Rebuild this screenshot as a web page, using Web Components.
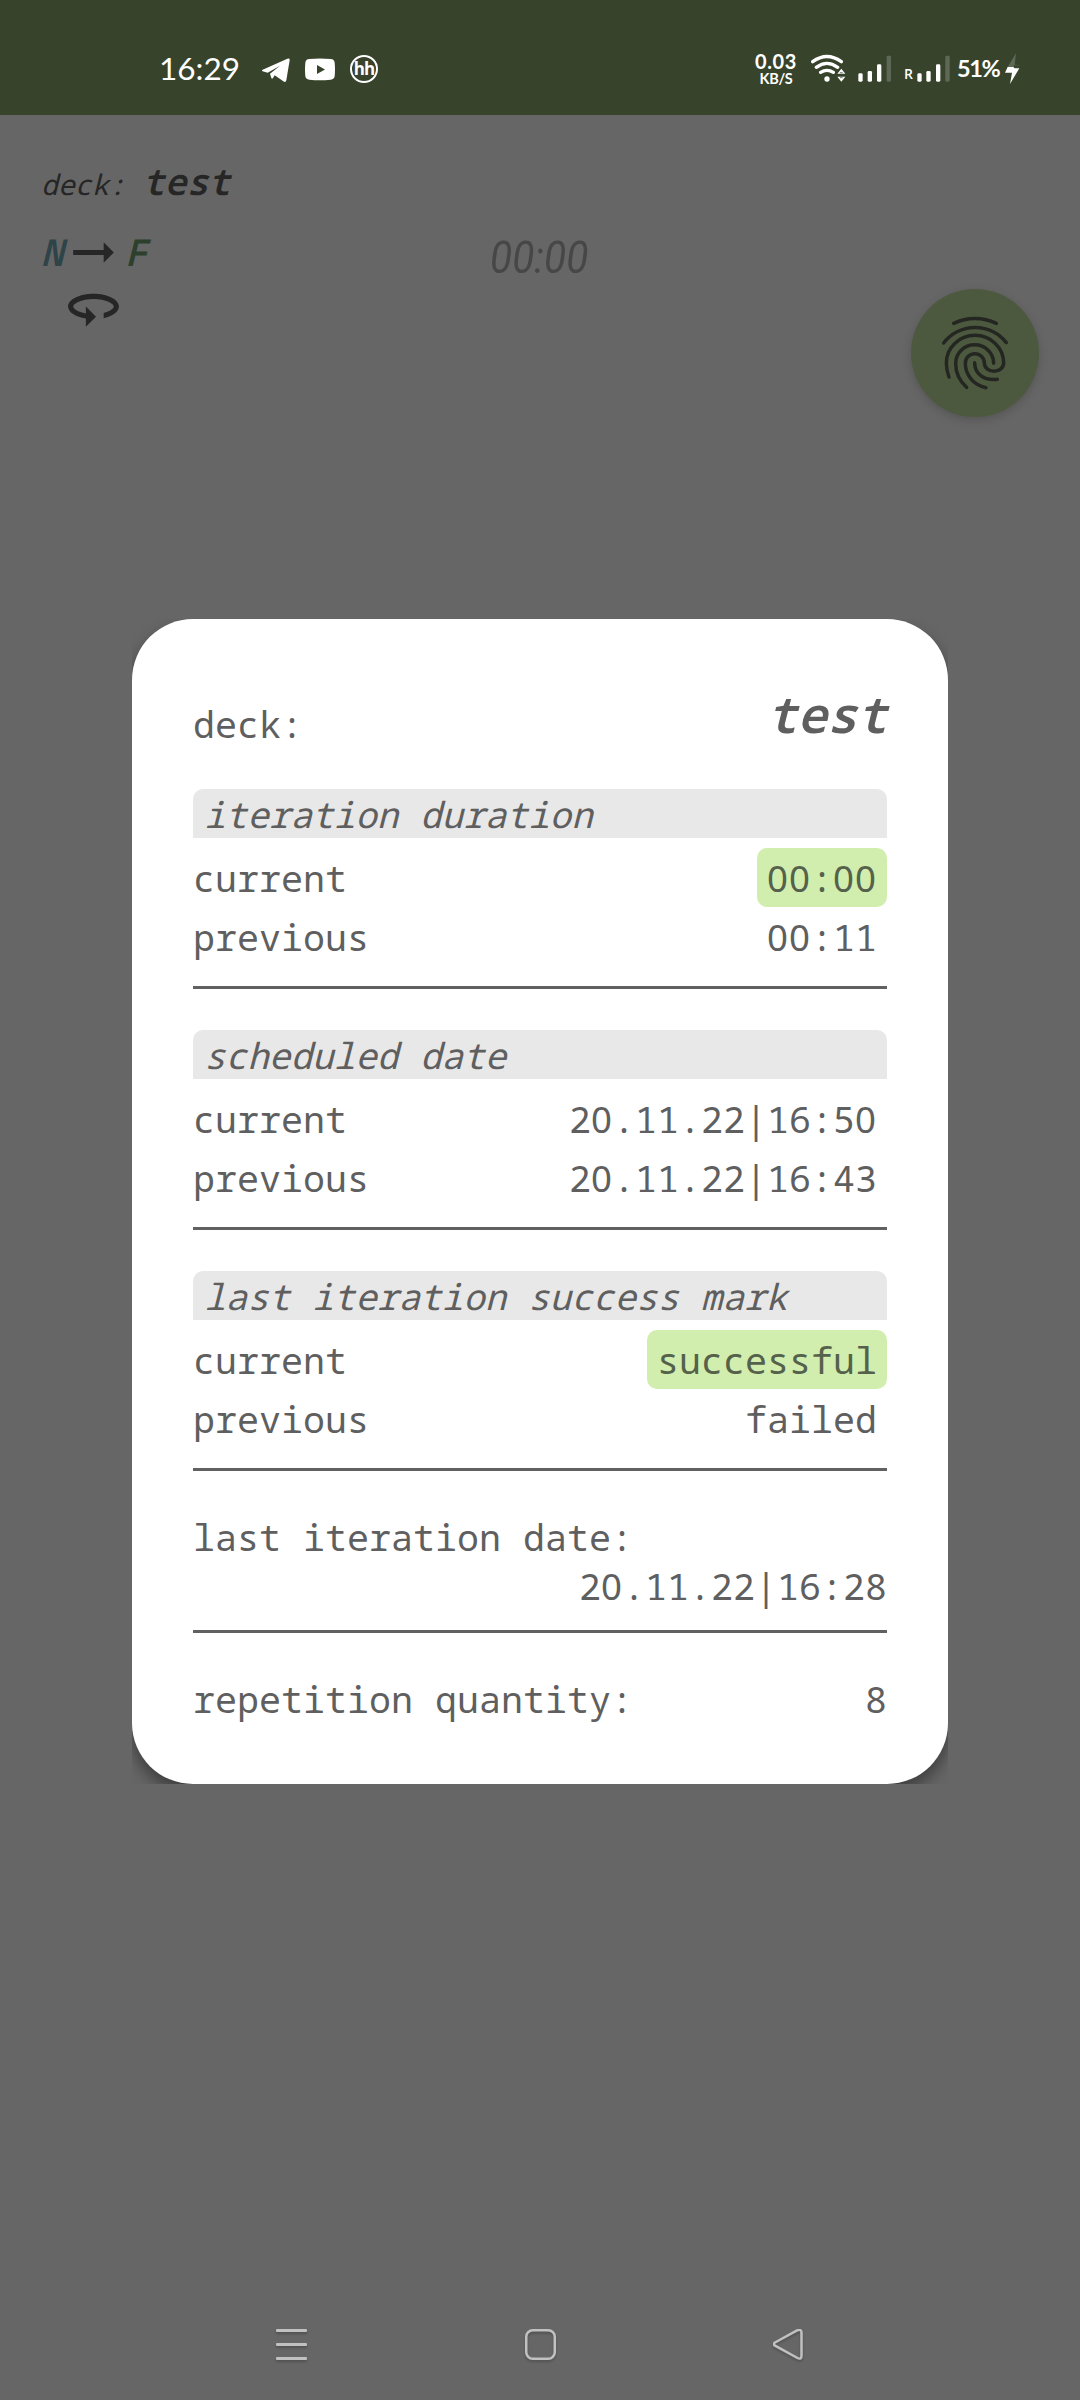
<!DOCTYPE html>
<html lang="en">
<head>
<meta charset="utf-8">
<title>Deck statistics</title>
<style>
html,body{margin:0;padding:0;background:#666}
body{width:1080px;height:2400px;overflow:hidden;font-family:"Noto Sans Mono","Droid Sans Mono","DejaVu Sans Mono",monospace}
</style>
</head>
<body>
<app-screen></app-screen>
<script>
function define(name, markup) {
  const tpl = document.createElement('template');
  tpl.innerHTML = markup;
  customElements.define(name, class extends HTMLElement {
    constructor() {
      super();
      this.attachShadow({ mode: 'open' }).append(tpl.content.cloneNode(true));
    }
  });
}

define('status-bar', `
<style>
:host{display:flex;height:115px;box-sizing:border-box;padding-top:40px;background:#38432c;color:#fff;font-family:Lato,"Open Sans",sans-serif}
svg{display:block;height:60px;flex:none}
.time{width:103px;margin-left:159px;font-size:31.5px;line-height:57px;white-space:nowrap}
.speed{width:44px;margin-left:auto;display:flex;flex-direction:column;align-items:center;font-weight:700;white-space:nowrap}
.num{font-size:20px;line-height:20px;margin-top:11px;letter-spacing:.6px}
.unit{font-size:14.5px;line-height:15px;letter-spacing:-.3px;margin-top:-.5px}
.r{width:9px;margin-left:13px;font:600 14px/68px "Open Sans",sans-serif}
.bat{width:43px;margin-left:7px;margin-right:1px;font-size:23.5px;font-weight:700;line-height:56px;letter-spacing:-1.4px;white-space:nowrap}
.left,.right{display:flex}
.right{margin-left:auto;margin-right:59px}
.hh{width:28px;height:28px;box-sizing:border-box;border:2px solid #fff;border-radius:50%;margin:15px 0 0 15px;font:700 17px/24px "Open Sans",sans-serif;text-align:center;letter-spacing:-1px}
</style>
<div class="left">
<span class="time">16:29</span>
<svg width="28" viewBox="367 0 84 180" fill="#fff"><path d="M369 89 443 56Q451 53 450 61L440 121Q438 129 431 124L405 106 400 114Q396 120 394 111L391 101 421 77 384 98 369 94Q365 92 369 89Z"/></svg>
<svg width="30" viewBox="495 0 90 180" style="margin-left:15px"><path fill="#fff" d="M508 57Q540 54 572 57 583 58 584 68 586 88 584 109 583 118 572 119 540 122 508 119 497 118 496 109 494 88 496 68 497 58 508 57Z"/><path fill="#38432c" d="M531 75v27l24-13.500Z"/></svg>
<span class="hh">hh</span>
</div>
<div class="right">
<div class="speed"><span class="num">0.03</span><span class="unit">KB/S</span></div>
<svg width="35" viewBox="240 0 105 180" style="margin-left:13px" fill="none" stroke="#fff" stroke-width="10" stroke-linecap="round"><path d="M245 65Q288 34 331 65M256 82Q288 58 320 82M269 97Q288 85 307 97"/><circle cx="288" cy="117" r="8" fill="#fff" stroke="none"/><path fill="#fff" stroke="none" d="M319 101 331 86 343 101ZM319 110H343L331 125Z"/><path stroke="#38432c" stroke-width="2" d="M328 98H334M328 113H334"/></svg>
<svg width="33" viewBox="382 0 99 180" style="margin-left:12px" fill="#fff"><rect x="383" y="100" width="13" height="25" rx="4"/><rect x="411" y="93" width="13" height="32" rx="4"/><rect x="439" y="73" width="13" height="52" rx="4"/><rect x="468" y="47" width="13" height="78" rx="4" opacity=".2"/></svg>
<span class="r">R</span>
<svg width="33" viewBox="560 0 99 180" style="margin-left:4px" fill="#fff"><rect x="561" y="100" width="13" height="25" rx="4"/><rect x="588" y="93" width="13" height="32" rx="4"/><rect x="617" y="73" width="13" height="52" rx="4"/><rect x="645" y="47" width="13" height="78" rx="4" opacity=".2"/></svg>
<span class="bat">51%</span>
<svg width="16" viewBox="825 0 48 180" style="margin-left:4px"><path fill="#5f6856" d="M858 40 831 84H843L850 87 852 76H873L854 74Z"/><path fill="#fff" d="M833 81H850L854 85H868L840 132 846 98H825Z"/></svg>
</div>`);

define('deck-header', `
<style>
:host{display:flex;height:400px;box-sizing:border-box;color:#262626;font-style:italic}
.info{width:420px;flex:none;padding:41px 0 0 41px;box-sizing:border-box}
.title{display:flex;align-items:baseline;height:50px;line-height:51px}
.label{font-size:28.2px}
.name{font-size:36.5px;font-weight:600;margin-left:17px}
.dir{display:flex;height:61px;margin-top:16px;font-size:37px;line-height:59px;font-weight:600}
.n{color:#2e4448;width:22px}.f{color:#2c402c;margin-left:1px}
svg{display:block}
.turn{margin:-7px 0 0 22px}
.body{width:491px;flex:none;box-sizing:border-box;padding-left:70px}
.timer{width:160px;margin-top:114px;font:italic 400 43.5px/60px Roboto,sans-serif;color:#474747;transform:scaleX(.935);transform-origin:0 0}
.fab{margin-top:174px;width:128px;height:128px;flex:none;border-radius:50%;background:#4d593f;box-shadow:0 3px 10px rgba(0,0,0,.17)}
</style>
<div class="info">
<div class="title"><span class="label">deck:</span><span class="name">test</span></div>
<div class="dir"><span class="n">N</span>
<svg width="61" height="61" viewBox="0 0 24 24" fill="#262626"><path d="M16.010 11H4v2h12.010v3L20 12l-3.990-4z"/></svg>
<span class="f">F</span></div>
<svg class="turn" width="61" height="61" viewBox="0 0 24 24" fill="#262626"><path d="M12 7C6.480 7 2 9.240 2 12c0 2.240 2.940 4.130 7 4.770V20l4-4-4-4v2.730c-3.150-.56-5-1.900-5-2.730 0-1.060 3.040-3 8-3s8 1.940 8 3c0 .73-1.460 1.890-4 2.530v2.050c3.530-.77 6-2.530 6-4.580 0-2.760-4.480-5-10-5z"/></svg>
</div>
<div class="body"><div class="timer">00:00</div></div>
<div class="fab"><svg width="128" height="128" viewBox="63 57 384 384" fill="none" stroke="#242721" stroke-width="10.500" stroke-linecap="round"><path d="M191 160A148 148 0 0 1 319 160M161 219A119 119 0 0 1 349 218M177 321Q169 300 169 279A86 83 0 0 1 341 279A29 25 0 0 1 283 279A28.500 28.500 0 0 0 226 280C226 315 250 345 288 353M230 352C208 333 197 310 197 280A57 56 0 0 1 311 280M254 278C254 310 280 333 322 328"/></svg></div>`);

define('stat-row', `
<style>
:host{display:flex;justify-content:space-between;height:59px;line-height:61px}
.value{padding:0 10px;border-radius:10px;height:59px}
:host([marked]) .value{background:#d1eeae;color:#55614b}
:host([plain]){height:49px;line-height:51px}
:host([plain]) .value{padding:0;height:49px}
</style><span><slot></slot></span><span class="value"><slot name="value"></slot></span>`);

define('stat-section', `
<style>
:host{display:block;border-bottom:3px solid #616161;padding-bottom:20px;margin-bottom:41px}
.heading{height:49px;font-size:36px;line-height:51px;padding-left:11px;border-radius:10px 10px 0 0;background:#e8e8e8;font-style:italic;margin-bottom:10px}
</style><div class="heading"><slot name="heading"></slot></div><slot></slot>`);

/* i.z swaps in an unslashed zero that keeps the 22px monospace advance */
define('stats-card', `
<style>
:host{display:block;width:816px;height:1165px;overflow:hidden}
.card{height:100%;box-sizing:border-box;padding:61px;background:#fff;border-radius:61px;box-shadow:0 9px 16px rgba(0,0,0,.4);color:#5f5f5f;font-size:36.67px;white-space:nowrap}
.top{display:flex;justify-content:space-between;align-items:flex-end;height:68px;margin-bottom:41px}
.top span{line-height:47px}
.top .name{font-size:50px;line-height:68px;font-style:italic;font-weight:600}
.date{border-bottom:3px solid #616161;padding-bottom:20px;margin-bottom:41px}
.date div{height:49px;line-height:51px}
.date div+div{text-align:right}
.z{font-family:"Noto Sans",sans-serif;font-style:normal;letter-spacing:1.03px;line-height:1}
</style>
<div class="card">
<div class="top"><span>deck:</span><span class="name">test</span></div>
<stat-section><span slot="heading">iteration duration</span>
<stat-row marked>current<span slot="value"><i class="z">00</i>:<i class="z">00</i></span></stat-row>
<stat-row>previous<span slot="value"><i class="z">00</i>:11</span></stat-row></stat-section>
<stat-section><span slot="heading">scheduled date</span>
<stat-row>current<span slot="value">2<i class="z">0</i>.11.22|16:5<i class="z">0</i></span></stat-row>
<stat-row>previous<span slot="value">2<i class="z">0</i>.11.22|16:43</span></stat-row></stat-section>
<stat-section><span slot="heading">last iteration success mark</span>
<stat-row marked>current<span slot="value">successful</span></stat-row>
<stat-row>previous<span slot="value">failed</span></stat-row></stat-section>
<div class="date"><div>last iteration date:</div><div>2<i class="z">0</i>.11.22|16:28</div></div>
<stat-row plain>repetition quantity:<span slot="value">8</span></stat-row>
</div>`);

define('nav-bar', `
<style>
:host{display:flex;justify-content:space-between;padding:0 275px 39px;margin-top:auto}
svg{display:block;filter:drop-shadow(0 2px 1px rgba(0,0,0,.2))}
</style>
<svg width="32" height="32" viewBox="0 0 32 32" fill="#c1c1c1"><rect x="1" width="31" height="3" rx="1"/><rect x="1" y="14" width="31" height="3" rx="1"/><rect x="1" y="28" width="31" height="3" rx="1"/></svg>
<svg width="32" height="32" viewBox="0 0 32 32" fill="none" stroke="#c1c1c1" stroke-width="2.500"><rect x="2.250" y="1.250" width="28.500" height="28.500" rx="6.500"/></svg>
<svg width="32" height="32" viewBox="0 0 32 32" fill="none" stroke="#c1c1c1" stroke-width="2.500"><path d="M2 13.500 24.500 1.200Q28.500-.2 28.500 4V26.500Q28.500 31 24.500 29L2 16.700Q-.3 15 2 13.500Z"/></svg>`);

define('app-screen', `
<style>
:host{display:flex;flex-direction:column;width:1080px;height:2400px;background:#666}
stats-card{margin:104px auto 0}
</style>
<status-bar></status-bar><deck-header></deck-header><stats-card></stats-card><nav-bar></nav-bar>`);
</script>
</body>
</html>
